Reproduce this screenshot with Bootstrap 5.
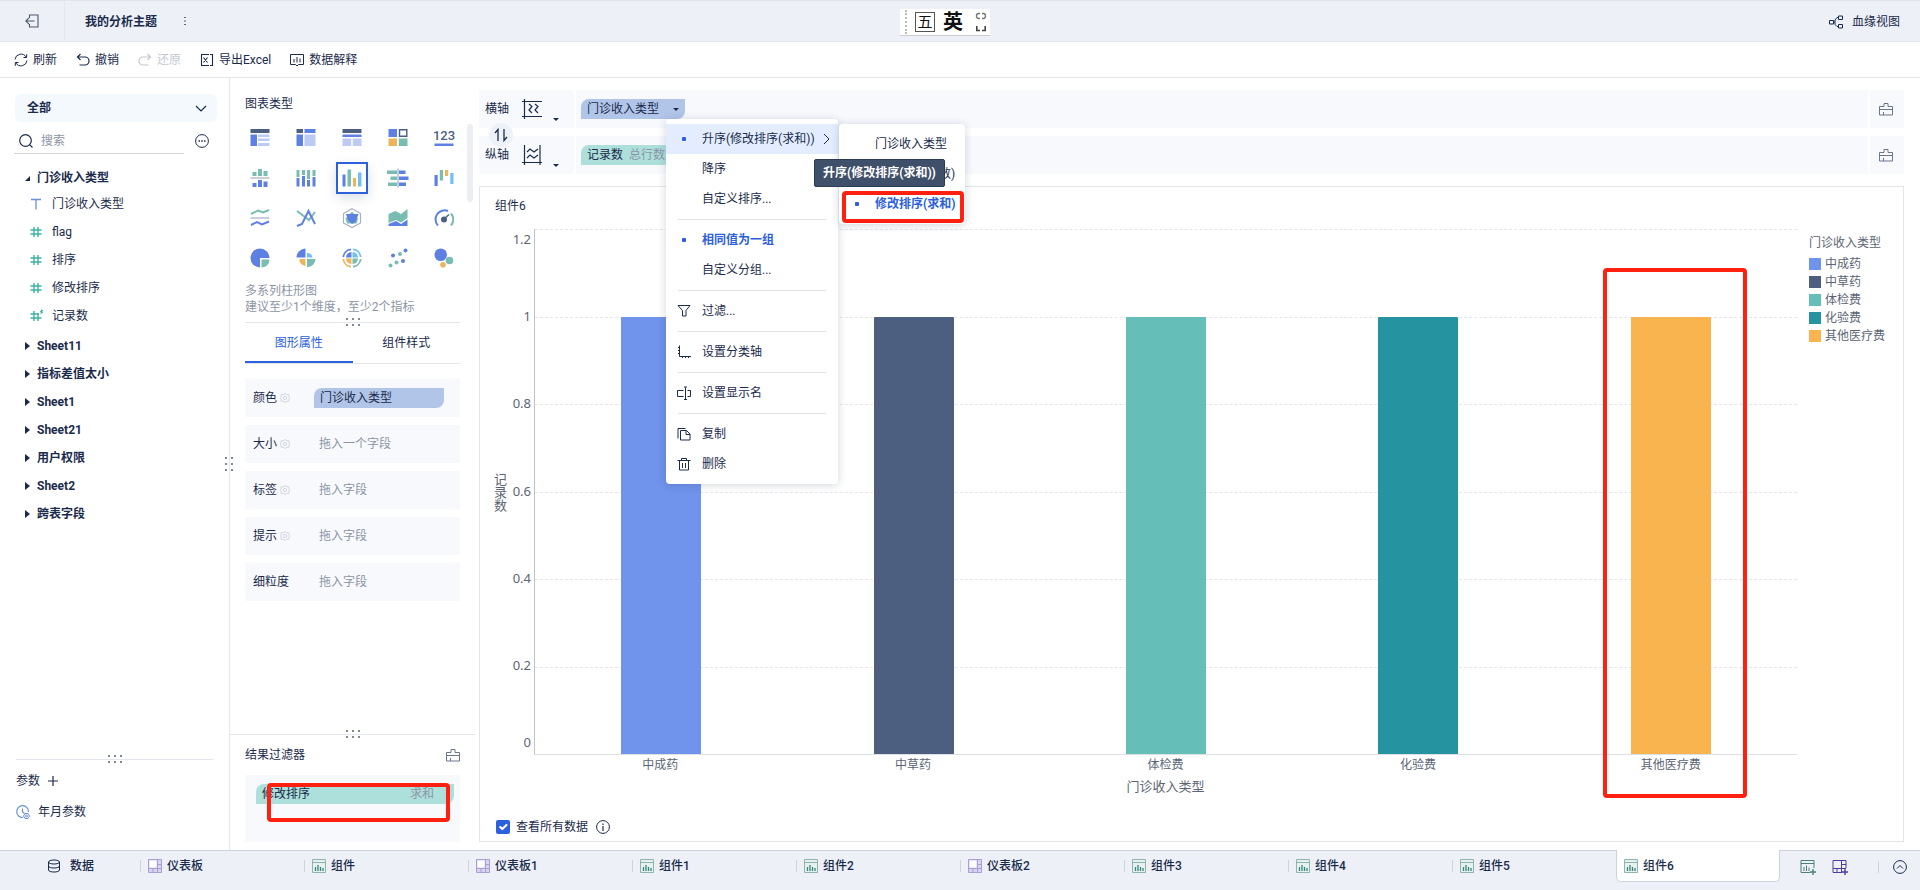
<!DOCTYPE html>
<html lang="zh-CN">
<head>
<meta charset="utf-8">
<meta name="viewport" content="width=device-width, initial-scale=1">
<title>我的分析主题</title>
<link href="https://cdn.jsdelivr.net/npm/bootstrap@5.3.0/dist/css/bootstrap.min.css" rel="stylesheet">
<style>
:root{--ink:#1a2b4c;--mute:#8c95a6;--line:#e3e6ed;--brand:#2c60dc;--shelf:#f8f9fd;--bar:#edf0f6}
body{font-family:Roboto,"Noto Sans CJK SC",sans-serif;font-size:12px;line-height:18px;color:var(--ink);background:#fff}
svg{display:block;flex:none;fill:none;stroke:currentColor}
.ic{width:14px;height:14px}
.btn{--bs-btn-padding-x:0;--bs-btn-padding-y:0;--bs-btn-font-size:12px;--bs-btn-line-height:18px;--bs-btn-border-width:0;--bs-btn-color:var(--ink);--bs-btn-border-radius:0;--bs-btn-disabled-color:#c3c8d1;--bs-btn-disabled-opacity:1;display:flex;align-items:center}
a{color:inherit;text-decoration:none}
.fc{color:var(--mute)}
/* header */
.topbar{height:42px;background:var(--bar);border-top:1px solid #e2e4e8;border-bottom:1px solid var(--line)}
.topbar .leave{width:65px;border-right:1px solid var(--line);justify-content:center}
.topbar .name{padding:2px 0 0 20px}
.topbar .more{margin-left:26px}
.topbar .lineage{padding:2px 20px 0 0;gap:9px}
.ime{position:absolute;left:50%;top:8px;width:90px;height:27px;margin-left:-60px;background:#fff;color:#111;border-bottom:1px solid #ccc;padding-left:5px;gap:8px}
.ime i{height:24px;border-left:2px dotted #bbb}
.ime .wu{width:20px;height:20px;border:1px solid #555;font-size:15px}
.ime .yin{font-size:20px;font-weight:700}
.toolbar{height:36px;border-bottom:1px solid var(--line);padding-left:14px;gap:19px}
.toolbar .btn{gap:5px}
/* sidebar */
.side{width:230px;border-right:1px solid var(--line);position:relative}
.picker{margin:16px 12px 0 15px;height:28px;border-radius:6px;background:#f4f9fe;padding:0 10px 0 12px!important}
.find{margin:6px 20px 0 14px;height:26px}
.find label{flex:1;margin-right:11px;height:26px;padding-left:5px;border-bottom:1px solid #d3d7df;gap:8px;display:flex;align-items:center}
.find input{border:0;outline:0;width:100%;padding:0;background:none;color:var(--ink)}
.find input::placeholder{color:var(--mute)}
.tree{margin-top:12px;padding-left:25px}
.tree .grp{height:28px;gap:7px}
.tree .grp.first{height:24px}
.tree .leaf{height:28px;padding-left:5px;gap:10px}
.tree ul+.grp{margin-top:2px}
.hash{color:#3cb1a4}
.params{height:90px;padding-top:12px}
.params .btn{gap:7px;margin-bottom:13px}
.dots{position:absolute;display:grid;gap:4px;z-index:2}
.dots.h{grid-template-columns:repeat(3,2px);grid-template-rows:2px 2px;left:50%;top:-4px;margin-left:-7px}
.dots.v{grid-template-columns:2px 2px;grid-template-rows:repeat(3,2px);right:-4px;top:50%;margin-top:-7px}
.dots b{background:#7e8899}
.splitter{position:relative;height:1px;background:var(--line)}
/* middle column */
.mid{width:249px}
.types{display:grid;grid-template-columns:repeat(5,46px);grid-auto-rows:40px;margin-left:7px;margin-top:5px}
.types .btn{justify-content:center}
.types .on svg{padding:4px;width:32px;height:32px;border:2px solid var(--brand);box-shadow:0 4px 12px #1a2b4c26}
.types svg{width:20px;height:20px;stroke:none}
.thumb{position:absolute;right:6px;top:46px;width:6px;height:78px;border-radius:3px;background:#edeef2}
.inset{margin:0 19px 0 15px}
.about{line-height:16px;padding:5px 0 7px}
.tabs2{border-bottom:1px solid var(--line);height:41px}
.tabs2 .btn{justify-content:center;flex:1}
.tabs2 .on{color:var(--brand);box-shadow:inset 0 -2px var(--brand)}
.attr{height:38px;background:var(--shelf);padding-left:8px;padding-right:16px}
.attr .nm{width:61px;gap:3px}
.pill{height:20px;border-radius:8px 0 8px 0;background:#b1c5e8;padding:0 6px!important}
.pill.t{background:#addfdb}
.hole{color:var(--mute);padding-left:5px}
.result{height:67px;background:var(--shelf);position:relative;padding:9px 6px 0 11px}
.ring{position:absolute;border:4px solid #ff2010;border-radius:4px;z-index:20;pointer-events:none}
.result .ring{left:22px;right:10px;top:8px;height:39px}
/* axis shelves */
.work{min-width:0;padding:12px 16px 8px 0}
.shelves{position:relative;gap:8px}
.axis{height:38px;background:var(--shelf)}
.axis .nm{width:97px;border-right:2px solid #fff;padding-left:6px;gap:12px;position:relative}
.axis .slot{flex:1;padding-left:5px;min-width:0}
.axis .wipe{width:36px;border-left:2px solid #fff;padding-left:9px;color:#6b768b}
.axis .nm svg{width:22px;height:22px}
.tri{border:solid transparent;border-width:3px 3px 0;border-top-color:var(--ink)}
.axis .nm .tri{margin-top:20px;margin-left:-2px}
.swap{position:absolute!important;left:10px;top:33px;width:24px;height:24px;border-radius:12px!important;background:#edf1f8!important;justify-content:center;z-index:2}
/* menus */
.menu{position:absolute;background:#fff;border-radius:4px;box-shadow:0 1px 8px #1a2b4c33;padding:5px 0;z-index:10}
.menu .btn{height:30px;width:100%;white-space:nowrap;text-align:left}
.menu hr{margin:5px 12px;border:0;border-top:1px solid #dfe2ea;opacity:1}
.menu .lead-ic{width:36px;padding-left:11px}
.menu .lead-ic i{display:block;width:4px;height:4px;border-radius:1px;background:var(--brand);margin-left:5px}
.menu .hot{background:#e3edff}
.menu .sel{color:var(--brand);font-weight:700}
.m1{left:85px;top:20px;width:172px}
.m2{left:173px;top:5px;width:126px}
.m2 .ring{left:3px;right:1px;bottom:1px;height:32px}
.tip{position:absolute;left:148px;top:40px;height:28px;line-height:26px;padding:0 8px;border:1px solid #2c3a52;border-radius:2px;background:#3f506a;color:#fff;font-weight:700;white-space:nowrap;z-index:15}
/* chart */
.panel{margin-top:12px;border:1px solid #e3e5ea;padding:10px 0 5px;min-height:0}
.caption6{padding-left:15px}
.chart{display:grid;grid-template-columns:14px 26px minmax(0,1fr) 106px;grid-template-rows:minmax(0,1fr) auto;padding-left:14px;margin-top:14px;color:#5b6575}
.ytitle{font-size:13px;line-height:13px;align-self:center}
.yaxis{display:flex;flex-direction:column;font:13px/20px "Noto Sans","Noto Sans CJK SC",sans-serif;text-align:right;padding-right:3px}
.yaxis span{flex:2 0 0;display:flex;align-items:center;justify-content:end;padding-bottom:3px}
.yaxis span:first-child{flex:1 0 0;align-items:start}
.yaxis span:last-child{flex:1 0 0;align-items:end}
.plot{display:grid;grid-template:minmax(0,1fr)/minmax(0,1fr);border-left:1px solid #bfc2c8;border-bottom:1px solid #dcdfe4}
.plot>div{grid-area:1/1;display:flex}
.rules{flex-direction:column}
.rules i{flex:1;border-top:1px dashed #e4e6ea}
.bars>div{flex:1;display:flex;align-items:end;justify-content:center;position:relative}
.bars b{width:80px;border-radius:1px 1px 0 0}
.bars .ring{left:58px;right:50px;top:39px;bottom:-44px}
.cats{display:flex;text-align:center;padding-top:1px}
.cats span{flex:1}
.xtitle{font-size:13px;line-height:20px;margin-top:3px;text-align:center}
.legend{padding:5px 0 0 12px}
.legend li{display:flex;align-items:center;gap:4px}
.legend b{width:12px;height:12px}
.legend ul{margin-top:3px}
.k1{background:#7093eb}.k2{background:#4c5f81}.k3{background:#66beb8}.k4{background:#2594a0}.k5{background:#f9b450}
.foot{margin:21px 0 0 16px;gap:6px}
.foot input{margin:0;width:14px;height:14px;border-radius:2px!important;border:0}
.foot .form-check-input:checked{background-color:var(--brand)}
.foot svg{margin-left:2px}
/* sheet tabs */
.sheets{height:40px;background:var(--bar);border-top:1px solid #cdd2dd}
.sheets .data{width:140px;padding-left:47px!important;gap:9px}
.sheets>.btn,.sheets .sh{height:30px;font-weight:500}
.sheets .sh{flex:0 1 164px;padding-left:8px!important;gap:5px;position:relative;white-space:nowrap}
.sheets .sh:before{content:"";position:absolute;left:0;top:9px;height:12px;width:1px;background:#cfd3dc}
.sheets .sh.on{background:#fff;height:32px;margin-top:-1px;border:1px solid #cdd2dd;border-top:0;border-radius:0 0 5px 5px;padding-left:7px!important}
.sheets .sh.on:before{display:none}
.sheets .end{padding-right:13px;height:31px}
.sheets .sepr{width:1px;height:12px;background:#cfd3dc;margin:0 14px 0 30px}
</style>
</head>
<body>
<svg width="0" height="0" class="position-absolute" aria-hidden="true">
 <symbol id="comp" viewBox="0 0 14 14"><path d="M.5.5h13v13H.5z" fill="#e6f0ef" stroke="#8fb3ae"/><path d="M.5 3.500h13" stroke="#8fb3ae"/><path d="M3.500 8v4M6 6v6M8.500 8v4M11 9v3" stroke="#3a8580" stroke-width="1.300"/></symbol>
 <symbol id="dash" viewBox="0 0 14 14"><path d="M.5.5h13v13H.5z" fill="#d9d3f0" stroke="#a79fd6"/><path d="M1.500 1.500h7v7h-7z" fill="#fff" stroke="none"/><path d="M9.500 1v12M1 9.500h12M5 10v3M10 5.500h3" stroke="#a79fd6"/></symbol>
 <symbol id="wipe" viewBox="0 0 14 14"><path d="M.5 4.500h4.500v-3h4v3h4.500v8.500H.5zM.5 7.500h13M4.500 13V10"/></symbol>
 <symbol id="gear" viewBox="0 0 10 10"><path d="M5 .5l1.800 1.200 2.200.2v2.200L9.500 5 9 6v2.100l-2.200.2L5 9.500 3.200 8.300 1 8.100V6L.5 5 1 4.100V1.900l2.200-.2z" stroke="#cdd1d9" stroke-width=".9"/><circle cx="5" cy="5" r="1.600" stroke="#cdd1d9" stroke-width=".9"/></symbol>
 <symbol id="hash" viewBox="0 0 12 12"><path d="M4 1v10M8 1v10M.5 4h11M.5 8h11" stroke-width="1.400"/></symbol>
</svg>
<div class="d-flex flex-column vh-100">
<header class="topbar d-flex align-items-stretch position-relative">
 <button class="btn leave" aria-label="退出"><svg class="ic" viewBox="0 0 14 14"><path d="M4.500 4V1h8.500v12H4.500V10M.8 7h8.700M4 3.800L.8 7 4 10.200" stroke="#4d596e" stroke-width="1.100"/></svg></button>
 <div class="name d-flex align-items-center fw-bold">我的分析主题</div>
 <button class="btn more" aria-label="更多"><svg width="4" height="10" viewBox="0 0 4 10"><path d="M1 1.500h2M1 5h2M1 8.500h2" stroke="#5c677b"/></svg></button>
 <div class="ime d-flex align-items-center"><i></i><span class="wu d-flex align-items-center justify-content-center">五</span><span class="yin">英</span><svg width="12" height="20" viewBox="0 0 12 20" class="ms-1"><path d="M5 1.500H3.500A2 2.500 0 0 0 3.500 6.500H5M7 1.500h1.500a2 2.500 0 0 1 0 5H7" stroke="#777" stroke-width="1.400"/><path d="M1.800 14v4.500H5M10.200 14v4.500H7" stroke="#444" stroke-width="1.600"/></svg></div>
 <a href="#" class="lineage ms-auto d-flex align-items-center"><svg class="ic" viewBox="0 0 14 14"><path d="M.5 5.500h4v3.500h-4zM9.500 1h4v3.500h-4zM9.500 9.500h4V13h-4zM9.500 2.500H8L6 5v4.500l2 2h1.500M4.500 7H6"/></svg>血缘视图</a>
</header>
<nav class="toolbar d-flex align-items-stretch">
 <button class="btn"><svg class="ic" viewBox="0 0 14 14"><path d="M1 6.500a6 6 0 0 1 11.200-2.300M13 7.500a6 6 0 0 1-11.200 2.300M12.700 1.200v3.300H9.500M1.300 12.800V9.500H4.500"/></svg>刷新</button>
 <button class="btn"><svg class="ic" viewBox="0 0 14 14"><path d="M4.500 1L1.500 4l3 3M1.500 4H9a4 4 0 0 1 0 8H3.500" stroke-width="1.200"/></svg>撤销</button>
 <button class="btn" disabled><svg class="ic" viewBox="0 0 14 14"><path d="M9.500 1l3 3-3 3M12.500 4H5a4 4 0 0 0 0 8h5.500" stroke-width="1.200"/></svg>还原</button>
 <button class="btn"><svg class="ic" viewBox="0 0 14 14"><path d="M9 1.500H1.500v11H9M10 1.500h2.500v11H10M3.500 4.500l4 5M7.500 4.500l-4 5" stroke-width="1.100"/></svg>导出Excel</button>
 <button class="btn"><svg class="ic" viewBox="0 0 14 14"><path d="M.5 1.500h13v10h-5L7 13l-1.500-1.500h-5zM4 6v3.500M7 4v5.500M10 5.500v4"/></svg>数据解释</button>
</nav>
<main class="d-flex flex-grow-1" style="min-height:0">
 <aside class="side d-flex flex-column flex-shrink-0">
  <button class="btn picker justify-content-between fw-bold">全部<svg width="12" height="7" viewBox="0 0 12 7"><path d="M1 1l5 5 5-5" stroke-width="1.200"/></svg></button>
  <div class="find d-flex align-items-center"><label for="q"><svg class="ic" viewBox="0 0 14 14"><circle cx="6.500" cy="6.500" r="5.800" stroke-width="1.200"/><path d="M10.800 10.800L13.500 13.500" stroke-width="1.200"/></svg><input id="q" type="text" placeholder="搜索"></label>
  <button class="btn" aria-label="更多"><svg class="ic" viewBox="0 0 14 14"><circle cx="7" cy="7" r="6.400"/><path d="M3.500 7H5M6.300 7h1.500M9 7h1.500" stroke-width="1.500"/></svg></button></div>
  <div class="tree flex-grow-1 overflow-hidden">
   <button class="btn grp first fw-bold"><svg width="5" height="5" viewBox="0 0 5 5"><path d="M5 0v5H0z" fill="currentColor" stroke="none"/></svg>门诊收入类型</button>
   <ul class="list-unstyled m-0">
    <li class="leaf d-flex align-items-center"><svg width="12" height="12" viewBox="0 0 12 12" style="color:#6d8fd6"><path d="M1 1.500h10M6 1.500V11.500" stroke-width="1.300"/></svg>门诊收入类型</li>
    <li class="leaf d-flex align-items-center"><svg width="12" height="12" class="hash"><use href="#hash"/></svg><span>flag</span></li>
    <li class="leaf d-flex align-items-center"><svg width="12" height="12" class="hash"><use href="#hash"/></svg>排序</li>
    <li class="leaf d-flex align-items-center"><svg width="12" height="12" class="hash"><use href="#hash"/></svg>修改排序</li>
    <li class="leaf d-flex align-items-center"><svg width="12" height="12" class="hash overflow-visible" viewBox="0 0 12 12"><path d="M4 1v10M8 3v8M.5 4h8.500M.5 8h11" stroke-width="1.400"/><path d="M10 1l3 2M13 0l-2.500 3.500M11.500-.5v4" stroke-width="1"/></svg>记录数</li>
   </ul>
   <button class="btn grp fw-bold"><svg width="5" height="8" viewBox="0 0 5 8"><path d="M0 0l5 4-5 4z" fill="currentColor" stroke="none"/></svg>Sheet11</button>
   <button class="btn grp fw-bold"><svg width="5" height="8" viewBox="0 0 5 8"><path d="M0 0l5 4-5 4z" fill="currentColor" stroke="none"/></svg>指标差值太小</button>
   <button class="btn grp fw-bold"><svg width="5" height="8" viewBox="0 0 5 8"><path d="M0 0l5 4-5 4z" fill="currentColor" stroke="none"/></svg>Sheet1</button>
   <button class="btn grp fw-bold"><svg width="5" height="8" viewBox="0 0 5 8"><path d="M0 0l5 4-5 4z" fill="currentColor" stroke="none"/></svg>Sheet21</button>
   <button class="btn grp fw-bold"><svg width="5" height="8" viewBox="0 0 5 8"><path d="M0 0l5 4-5 4z" fill="currentColor" stroke="none"/></svg>用户权限</button>
   <button class="btn grp fw-bold"><svg width="5" height="8" viewBox="0 0 5 8"><path d="M0 0l5 4-5 4z" fill="currentColor" stroke="none"/></svg>Sheet2</button>
   <button class="btn grp fw-bold"><svg width="5" height="8" viewBox="0 0 5 8"><path d="M0 0l5 4-5 4z" fill="currentColor" stroke="none"/></svg>跨表字段</button>
  </div>
  <div class="splitter mx-3"><div class="dots h"><b></b><b></b><b></b><b></b><b></b><b></b></div></div>
  <div class="params px-3">
   <button class="btn">参数<svg width="12" height="12" viewBox="0 0 12 12"><path d="M6 1v10M1 6h10" stroke-width="1.200"/></svg></button>
   <div class="d-flex align-items-center gap-2"><svg class="ic" viewBox="0 0 14 14" style="color:#6b8fd8"><path d="M7 12.500A5.900 5.900 0 1 1 12.500 7M6.500 3.500V7l2 1.500" stroke-width="1.200"/><circle cx="10.500" cy="11" r="1"/><path d="M7.500 11l1.500-2.500h3L13.500 11 12 13.500H9z"/></svg>年月参数</div>
  </div>
  <div class="dots v"><b></b><b></b><b></b><b></b><b></b><b></b></div>
 </aside>
 <section class="mid d-flex flex-column flex-shrink-0 position-relative">
  <div class="inset" style="padding-top:17px">图表类型</div>
  <div class="types">
   <button class="btn" aria-label="分组表"><svg viewBox="0 0 20 20"><path d="M.5 1h19v4H.5z" fill="#4c5f81"/><path d="M.5 6.500h6.500v11.500H.5z" fill="#5e80e2"/><path d="M8 6.500h11.500V9H8zM8 10.500h11.500V13H8zM8 15h11.500v3H8z" fill="#bccaf5"/></svg></button>
   <button class="btn" aria-label="交叉表"><svg viewBox="0 0 20 20"><path d="M.5 1H7v4H.5z" fill="#4c5f81"/><path d="M.5 6.500H7v11.500H.5zM8.500 1h11v4h-11z" fill="#5e80e2"/><path d="M8.500 6.500h11v11.500h-11z" fill="#bccaf5"/></svg></button>
   <button class="btn" aria-label="明细表"><svg viewBox="0 0 20 20"><path d="M.5 1h19v4H.5z" fill="#4c5f81"/><path d="M.5 6.500h19v2.500H.5z" fill="#5e80e2"/><path d="M.5 10.500h8.700v7.500H.5zM10.800 10.500h8.700v7.500h-8.700z" fill="#bccaf5"/></svg></button>
   <button class="btn" aria-label="色块"><svg viewBox="0 0 20 20"><path d="M.5 1h8.500v8H.5z" fill="#5e80e2"/><path d="M11.500 1.700h7.300v6.600h-7.300z" stroke="#4c5f81" stroke-width="1.400"/><path d="M.5 10.500h8.500v7.500H.5z" fill="#edb45c"/><path d="M10.800 10.500h8.700v7.500h-8.700z" fill="#78bcb2"/></svg></button>
   <button class="btn" aria-label="指标卡"><svg viewBox="0 0 20 20" overflow="visible"><text x="10" y="12" text-anchor="middle" font-size="13" font-weight="500" fill="#4c5f81">123</text><path d="M.5 15.500h19V18H.5z" fill="#5e80e2"/></svg></button>

   <button class="btn" aria-label="对比柱形图"><svg viewBox="0 0 20 20"><path d="M2.500 4h4v4h-4zM8 1h4v7H8zM13.500 3h4v5h-4z" fill="#78bcb2"/><path d="M.5 9h19v2H.5z" fill="#c9cedb"/><path d="M2.500 15h4v4h-4zM8 12h4v7H8zM13.500 13.500h4V19h-4z" fill="#5e80e2"/></svg></button>
   <button class="btn" aria-label="堆积柱形图"><svg viewBox="0 0 20 20"><path d="M.5 2h3v7h-3zM6 2h3v5H6zM11 2h3v9h-3zM16.500 2h3v6h-3z" fill="#78bcb2"/><path d="M.5 10h3v8.500h-3zM6 8h3v10.500H6zM11 12h3v6.500h-3zM16.500 9h3v9.500h-3z" fill="#5e80e2"/></svg></button>
   <button class="btn on" aria-label="多系列柱形图"><svg viewBox="0 0 20 20"><path d="M.5 6.500h3v12h-3z" fill="#5e80e2"/><path d="M5.500 1.500h3.500v17H5.500z" fill="#78bcb2"/><path d="M11 10h3v8.500h-3z" fill="#edb45c"/><path d="M16 4.500h3.500v14H16z" fill="#70bff0"/></svg></button>
   <button class="btn" aria-label="对比条形图"><svg viewBox="0 0 20 20" overflow="visible"><path d="M-1 2.500h10V6H-1zM2.500 8.500H9V12H2.500zM0 14.500h9V18H0z" fill="#78bcb2"/><path d="M11 2.500h6.500V6H11zM11 8.500h9.500V12H11zM11 14.500h7V18h-7z" fill="#5e80e2"/><path d="M9 .5h2v19H9z" fill="#c9cedb"/></svg></button>
   <button class="btn" aria-label="瀑布图"><svg viewBox="0 0 20 20"><path d="M.5 7h3.200v11H.5z" fill="#5e80e2"/><path d="M5.800 2H9v10.500H5.800z" fill="#78bcb2"/><path d="M11 2h3.200v6H11z" fill="#edb45c"/><path d="M16.300 5h3.200v11h-3.200z" fill="#70bff0"/></svg></button>

   <button class="btn" aria-label="多系列折线图"><svg viewBox="0 0 20 20"><path d="M1 6l7-3.500 5 2L19 2" stroke="#78bcb2" stroke-width="2"/><path d="M.5 9h19v2H.5z" fill="#c9cedb"/><path d="M1 17l6-3 5 2.500 7-3" stroke="#5e80e2" stroke-width="2"/></svg></button>
   <button class="btn" aria-label="折线图"><svg viewBox="0 0 20 20"><path d="M1 3l12 9 6-8" stroke="#78bcb2" stroke-width="2"/><path d="M1 18l5-2 6.500-13L19 16" stroke="#5e80e2" stroke-width="2"/></svg></button>
   <button class="btn" aria-label="雷达图"><svg viewBox="0 0 20 20"><path d="M10 .8l8.500 4.700v9.500L10 19.500 1.500 15V5.500z" stroke="#a7afbf" stroke-width="1.200"/><path d="M10 3.500l6 7-1.500 5H5l-1.500-5z" fill="#78bcb2"/><path d="M4 6h12.500l-3 8-3.500 2-4-4z" fill="#5e80e2"/></svg></button>
   <button class="btn" aria-label="面积图"><svg viewBox="0 0 20 20"><path d="M.5 6l7-3 5.500 3 6.500-5v9L13 14.500 8 12 .5 15z" fill="#78bcb2"/><path d="M.5 16L8 13l5 3 6.500-4.500V18H.5z" fill="#5e80e2"/></svg></button>
   <button class="btn" aria-label="仪表盘"><svg viewBox="0 0 20 20"><path d="M4 17.500A9 9 0 0 1 14 3" stroke="#5e80e2" stroke-width="2"/><path d="M17 5.500a9 9 0 0 1 0 12" stroke="#78bcb2" stroke-width="2"/><circle cx="10" cy="11.500" r="3" fill="#4c5f81"/><path d="M10 11l5-4.500" stroke="#4c5f81" stroke-width="1.500"/></svg></button>

   <button class="btn" aria-label="饼图"><svg viewBox="0 0 20 20"><path d="M10 10V19.500A9.500 9.500 0 1 1 19.500 10z" fill="#5e80e2"/><path d="M11.500 11.500h8a8 8 0 0 1-8 8z" fill="#78bcb2"/></svg></button>
   <button class="btn" aria-label="玫瑰图"><svg viewBox="0 0 20 20"><path d="M9.500 9.500H.5a9 9 0 0 1 9-9z" fill="#5e80e2"/><path d="M11 9.500V5a5.500 5.500 0 0 1 5.500 4.500z" fill="#70bff0"/><path d="M9.500 11v7A6.500 6.500 0 0 1 3.500 11z" fill="#edb45c"/><path d="M11 11h8.500a8 8 0 0 1-8.500 8z" fill="#78bcb2"/></svg></button>
   <button class="btn" aria-label="多层饼图"><svg viewBox="0 0 20 20"><path d="M9.500 4v5.500H4A6 6 0 0 1 9.500 4z" fill="#5e80e2"/><path d="M10.500 4v5.500H16A6 6 0 0 0 10.500 4z" fill="#70bff0"/><path d="M9.500 16v-5.500H4A6 6 0 0 0 9.500 16z" fill="#edb45c"/><path d="M10.500 16v-5.500H16a6 6 0 0 1-5.500 5.500z" fill="#78bcb2"/><path d="M1.300 9A8.700 8.700 0 0 1 9 1.300" stroke="#5e80e2" stroke-width="1.800"/><path d="M11 1.300A8.700 8.700 0 0 1 18.700 9" stroke="#70bff0" stroke-width="1.800"/><path d="M1.300 11A8.700 8.700 0 0 0 9 18.700" stroke="#edb45c" stroke-width="1.800"/><path d="M18.700 11a8.700 8.700 0 0 1-7.700 7.700" stroke="#78bcb2" stroke-width="1.800"/></svg></button>
   <button class="btn" aria-label="散点图"><svg viewBox="0 0 20 20"><g fill="#5e80e2"><circle cx="17.500" cy="2.500" r="2"/><circle cx="5" cy="7.500" r="2"/><circle cx="15" cy="13" r="2"/></g><g fill="#78bcb2"><circle cx="12" cy="6" r="2"/><circle cx="8.500" cy="14.500" r="2"/><circle cx="2.500" cy="17.500" r="2"/></g></svg></button>
   <button class="btn" aria-label="气泡图"><svg viewBox="0 0 20 20"><circle cx="6.700" cy="6.700" r="6.300" fill="#5e80e2"/><circle cx="15.500" cy="12.500" r="3.800" fill="#78bcb2"/><circle cx="9" cy="16.700" r="2.800" fill="#edb45c"/></svg></button>
  </div>
  <div class="thumb"></div>
  <div class="about inset fc">多系列柱形图<br>建议至少1个维度，至少2个指标</div>
  <div class="splitter inset"><div class="dots h"><b></b><b></b><b></b><b></b><b></b><b></b></div></div>
  <div class="tabs2 inset d-flex"><button class="btn on">图形属性</button><button class="btn">组件样式</button></div>
  <div class="inset d-flex flex-column gap-2" style="padding-top:15px">
   <div class="attr d-flex align-items-center"><span class="nm d-flex align-items-center">颜色<svg width="10" height="10"><use href="#gear"/></svg></span><button class="btn pill flex-fill">门诊收入类型</button></div>
   <div class="attr d-flex align-items-center"><span class="nm d-flex align-items-center">大小<svg width="10" height="10"><use href="#gear"/></svg></span><span class="hole">拖入一个字段</span></div>
   <div class="attr d-flex align-items-center"><span class="nm d-flex align-items-center">标签<svg width="10" height="10"><use href="#gear"/></svg></span><span class="hole">拖入字段</span></div>
   <div class="attr d-flex align-items-center"><span class="nm d-flex align-items-center">提示<svg width="10" height="10"><use href="#gear"/></svg></span><span class="hole">拖入字段</span></div>
   <div class="attr d-flex align-items-center"><span class="nm">细粒度</span><span class="hole">拖入字段</span></div>
  </div>
  <div class="splitter mt-auto me-1"><div class="dots h"><b></b><b></b><b></b><b></b><b></b><b></b></div></div>
  <div class="inset d-flex align-items-center justify-content-between" style="height:40px">结果过滤器<button class="btn" style="color:#6b768b" aria-label="清空"><svg class="ic"><use href="#wipe"/></svg></button></div>
  <div class="inset result mb-2"><button class="btn pill t w-100 justify-content-between" style="padding-right:20px!important">修改排序<span class="fc">求和</span></button><div class="ring"></div></div>
 </section>
 <section class="work flex-grow-1 d-flex flex-column">
  <div class="shelves d-flex flex-column">
   <div class="axis d-flex align-items-stretch">
    <div class="nm d-flex align-items-center">横轴<button class="btn" aria-label="横轴设置"><svg viewBox="0 0 22 22"><path d="M1 3.500h20M1 18.500h20M3.500 1v20M8 6l3 2.500L8 12l3 3M14 6l3 2.500-3 3.500 3 3" stroke-width="1.200"/></svg></button><i class="tri"></i></div>
    <div class="slot d-flex align-items-center"><div class="position-relative">
     <button class="btn pill" style="gap:14px"><span>门诊收入类型</span><i class="tri"></i></button>
     <div class="menu m1">
      <button class="btn hot"><span class="lead-ic"><i></i></span>升序(修改排序(求和))<svg width="7" height="12" viewBox="0 0 7 12" class="ms-auto me-2"><path d="M1 1l5 5-5 5"/></svg></button>
      <button class="btn"><span class="lead-ic"></span>降序</button>
      <button class="btn"><span class="lead-ic"></span>自定义排序...</button>
      <hr>
      <button class="btn sel"><span class="lead-ic"><i></i></span>相同值为一组</button>
      <button class="btn"><span class="lead-ic"></span>自定义分组...</button>
      <hr>
      <button class="btn"><span class="lead-ic"><svg class="ic" viewBox="0 0 14 14"><path d="M1 1.500h12L9 6.500v5.500H5.500V6.500z"/></svg></span>过滤...</button>
      <hr>
      <button class="btn"><span class="lead-ic"><svg class="ic" viewBox="0 0 14 14"><path d="M2.500 .5v11H14M1 2.500h1.500M1 5.500h1.500M1 8.500h1.500M5.500 11.500V13M8.500 11.500V13M11.500 11.500V13"/></svg></span>设置分类轴</button>
      <hr>
      <button class="btn"><span class="lead-ic"><svg class="ic" viewBox="0 0 14 14"><path d="M6.500 4.500h-6v6h6M10.500 4.500h3v6h-3M8.500 1.500v12M7 1h3M7 13.500h3"/></svg></span>设置显示名</button>
      <hr>
      <button class="btn"><span class="lead-ic"><svg class="ic" viewBox="0 0 14 14"><path d="M3.500 3.500h6l3.500 3.500v6H3.500zM9 3.500V7.500h4M1 11.500V1.500h7.500"/></svg></span>复制</button>
      <button class="btn"><span class="lead-ic"><svg class="ic" viewBox="0 0 14 14"><path d="M.5 3.500h13M4.500 3.500V1.500h5v2M2.500 3.500v9.500h9V3.500M5.500 6v5M8.500 6v5"/></svg></span>删除</button>
      <div class="menu m2">
       <button class="btn"><span class="lead-ic"></span>门诊收入类型</button>
       <button class="btn"><span class="lead-ic"></span>记录数(总行数)</button>
       <button class="btn sel"><span class="lead-ic"><i></i></span>修改排序(求和)</button>
       <div class="ring"></div>
      </div>
      <div class="tip" role="tooltip">升序(修改排序(求和))</div>
     </div>
    </div></div>
    <button class="btn wipe" aria-label="清空"><svg class="ic"><use href="#wipe"/></svg></button>
   </div>
   <div class="axis d-flex align-items-stretch">
    <div class="nm d-flex align-items-center">纵轴<button class="btn" aria-label="纵轴设置"><svg viewBox="0 0 22 22"><path d="M3.500 1v20M19 1v20M1 18.500h20M6 8l3-3 4 3 4-3M6 14l3-3 4 3 4-3" stroke-width="1.200"/></svg></button><i class="tri"></i></div>
    <div class="slot d-flex align-items-center"><button class="btn pill t" style="gap:6px"><span>记录数</span><span class="fc">总行数</span></button></div>
    <button class="btn wipe" aria-label="清空"><svg class="ic"><use href="#wipe"/></svg></button>
   </div>
   <button class="btn swap" aria-label="交换"><svg class="ic" viewBox="0 0 14 14"><path d="M4 13V1.500L1 5M10 1v11.500L13 9" stroke-width="1.300"/></svg></button>
  </div>
  <div class="panel flex-grow-1 d-flex flex-column">
   <div class="caption6">组件6</div>
   <div class="chart flex-grow-1">
    <div class="ytitle">记录数</div>
    <div class="yaxis"><span>1.2</span><span>1</span><span>0.8</span><span>0.6</span><span>0.4</span><span>0.2</span><span>0</span></div>
    <div class="plot">
     <div class="rules"><i></i><i></i><i></i><i></i><i></i><i></i></div>
     <div class="bars">
      <div><b class="k1" style="height:83.33%"></b></div>
      <div><b class="k2" style="height:83.33%"></b></div>
      <div><b class="k3" style="height:83.33%"></b></div>
      <div><b class="k4" style="height:83.33%"></b></div>
      <div><b class="k5" style="height:83.33%"></b><div class="ring"></div></div>
     </div>
    </div>
    <div class="legend">门诊收入类型
     <ul class="list-unstyled mb-0"><li><b class="k1"></b>中成药</li><li><b class="k2"></b>中草药</li><li><b class="k3"></b>体检费</li><li><b class="k4"></b>化验费</li><li><b class="k5"></b>其他医疗费</li></ul>
    </div>
    <div style="grid-column:3">
     <div class="cats"><span>中成药</span><span>中草药</span><span>体检费</span><span>化验费</span><span>其他医疗费</span></div>
     <div class="xtitle">门诊收入类型</div>
    </div>
   </div>
   <div class="foot d-flex align-items-center"><input class="form-check-input" type="checkbox" id="all" checked><label for="all">查看所有数据</label><svg class="ic" viewBox="0 0 14 14"><circle cx="7" cy="7" r="6.400"/><path d="M7 6v5M7 3.500V5" stroke-width="1.200"/></svg></div>
  </div>
 </section>
</main>
<footer class="sheets d-flex align-items-start">
 <button class="btn data"><svg class="ic" viewBox="0 0 14 14"><ellipse cx="7" cy="3" rx="5.500" ry="2"/><path d="M1.500 3v8c0 2.700 11 2.700 11 0V3M1.500 7c0 2.700 11 2.700 11 0"/></svg>数据</button>
 <button class="btn sh"><svg class="ic"><use href="#dash"/></svg>仪表板</button>
 <button class="btn sh"><svg class="ic"><use href="#comp"/></svg>组件</button>
 <button class="btn sh"><svg class="ic"><use href="#dash"/></svg>仪表板1</button>
 <button class="btn sh"><svg class="ic"><use href="#comp"/></svg>组件1</button>
 <button class="btn sh"><svg class="ic"><use href="#comp"/></svg>组件2</button>
 <button class="btn sh"><svg class="ic"><use href="#dash"/></svg>仪表板2</button>
 <button class="btn sh"><svg class="ic"><use href="#comp"/></svg>组件3</button>
 <button class="btn sh"><svg class="ic"><use href="#comp"/></svg>组件4</button>
 <button class="btn sh"><svg class="ic"><use href="#comp"/></svg>组件5</button>
 <button class="btn sh on"><svg class="ic"><use href="#comp"/></svg>组件6</button>
 <div class="end ms-auto d-flex align-items-center">
  <button class="btn" aria-label="添加组件"><svg width="16" height="16" viewBox="0 0 16 16"><path d="M14 9V1.500H1v12h9M1 4.500h13M4 8v4M6.500 6.500V12M9 8.500V12" stroke="#4a7f7a"/><path d="M13 10v6M10 13h6" stroke="#4a7f7a" stroke-width="1.400"/></svg></button>
  <button class="btn ms-3" aria-label="添加仪表板"><svg width="16" height="16" viewBox="0 0 16 16"><path d="M14 9V1.500H1v12h9M9.500 1.500v12M1 9.500h13M5 9.500v4M9.500 5.500H14" stroke="#4d3aa6"/><path d="M13 10v6M10 13h6" stroke="#4d3aa6" stroke-width="1.400"/></svg></button>
  <span class="sepr"></span>
  <button class="btn" aria-label="收起"><svg class="ic" viewBox="0 0 14 14"><circle cx="7" cy="7" r="6.400"/><path d="M4 8.500l3-3 3 3"/></svg></button>
 </div>
</footer>
</div>
<script src="https://cdn.jsdelivr.net/npm/bootstrap@5.3.0/dist/js/bootstrap.bundle.min.js"></script>
</body>
</html>
